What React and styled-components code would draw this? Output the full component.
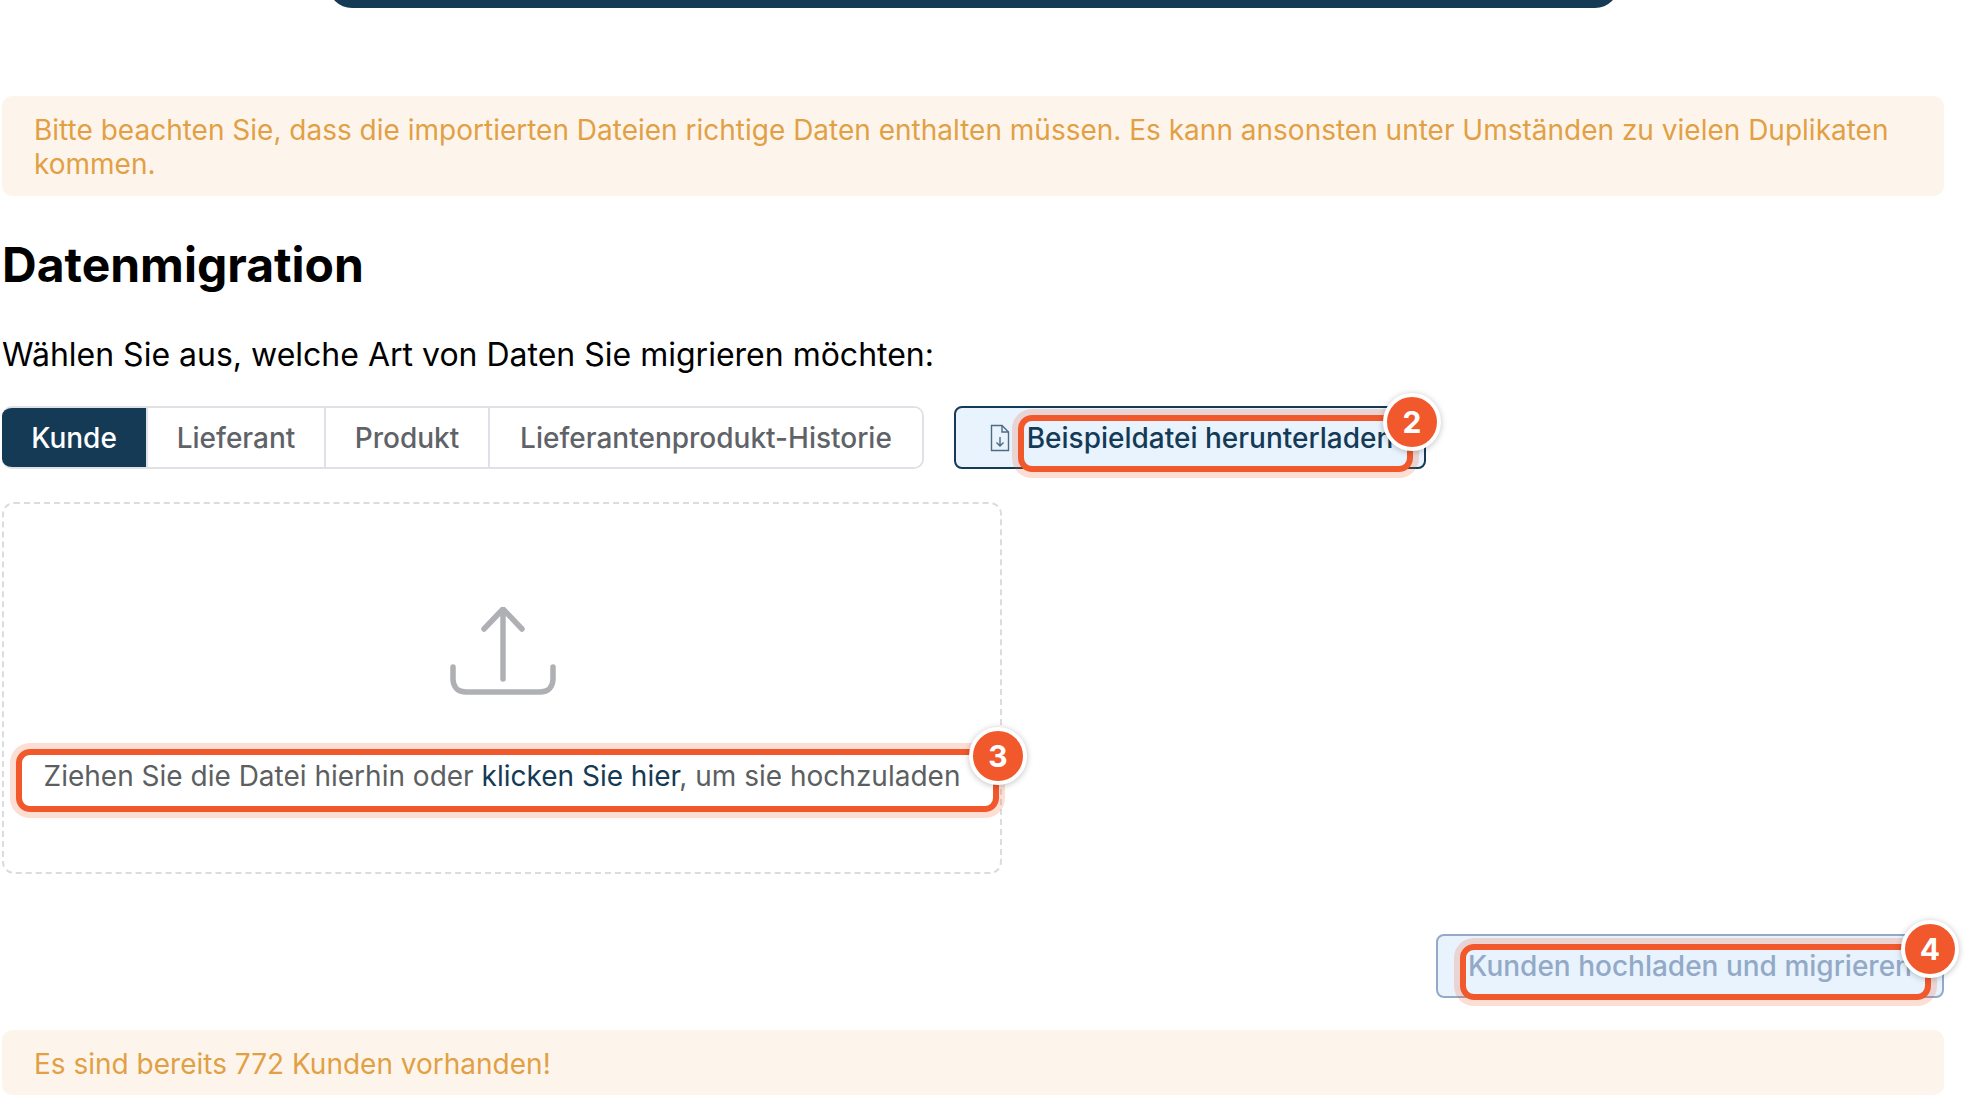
import React from "react";
import styled, { createGlobalStyle } from "styled-components";

const GlobalStyle = createGlobalStyle`
  html, body {
    margin: 0;
    padding: 0;
    background: #fff;
    font-family: "Inter", "Liberation Sans", sans-serif;
  }
`;

const navy = "#153a56";
const accent = "#f1582c";

const Page = styled.div`
  width: 1976px;
  height: 1120px;
  box-sizing: border-box;
  padding: 0 32px 0 2px;
  overflow: hidden;
`;

const TopBar = styled.div`
  width: 1291px;
  height: 24px;
  margin: -16px 0 0 326px;
  background: ${navy};
  border-radius: 0 0 24px 24px;
`;

const Alert = styled.div`
  box-sizing: border-box;
  margin-top: ${(p) => p.$top}px;
  padding: 17px 32px ${(p) => p.$bottom}px;
  background: #fdf5ec;
  color: #e2a044;
  border-radius: 10px;
  font-size: 28px;
  line-height: 34px;
`;

const Title = styled.h1`
  margin: 43px 0 0;
  font-size: 48px;
  line-height: 52px;
  font-weight: 700;
  color: #000;
`;

const Lead = styled.p`
  margin: 44px 0 0;
  font-size: 32px;
  line-height: 40px;
  color: #000;
`;

const Toolbar = styled.div`
  display: flex;
  gap: 30px;
  margin-top: 31px;
`;

const Tabs = styled.div`
  display: flex;
  box-sizing: border-box;
  width: 922px;
  height: 63px;
  border: 2px solid #dfe1e6;
  border-left: 0;
  border-radius: 10px;
  overflow: hidden;
`;

const Tab = styled.div`
  display: flex;
  align-items: center;
  justify-content: center;
  flex: ${(p) => (p.$width ? `0 0 ${p.$width}px` : "1")};
  box-sizing: border-box;
  font-size: 28px;
  font-weight: 500;
  color: ${(p) => (p.$active ? "#fff" : "#5f6368")};
  background: ${(p) => (p.$active ? navy : "#fff")};
  & + & {
    border-left: 2px solid #dfe1e6;
  }
`;

const Button = styled.div`
  position: relative;
  display: flex;
  align-items: center;
  justify-content: center;
  gap: 17px;
  box-sizing: border-box;
  width: ${(p) => p.$width}px;
  height: ${(p) => p.$height}px;
  padding-left: ${(p) => p.$indent || 0}px;
  background: #e8f3fd;
  border: 2px solid ${(p) => (p.$disabled ? "#93a9c6" : navy)};
  border-radius: 8px;
  color: ${(p) => (p.$disabled ? "#93a9c6" : navy)};
  font-size: 28px;
  font-weight: 500;
`;

const DropZone = styled.div`
  position: relative;
  display: flex;
  flex-direction: column;
  align-items: center;
  box-sizing: border-box;
  width: 1000px;
  height: 372px;
  margin-top: 33px;
  padding-top: 103px;
  border: 2px dashed #dcdcdc;
  border-radius: 12px;
`;

const DropText = styled.div`
  margin-top: 59px;
  font-size: 28px;
  line-height: 44px;
  color: #5c5f62;
  white-space: nowrap;
`;

const Link = styled.span`
  color: ${navy};
`;

const Actions = styled.div`
  display: flex;
  justify-content: flex-end;
  margin-top: 60px;
`;

const Highlight = styled.div`
  position: absolute;
  top: ${(p) => p.$top}px;
  left: ${(p) => p.$left}px;
  width: ${(p) => p.$width}px;
  height: ${(p) => p.$height}px;
  box-sizing: border-box;
  border: 6px solid ${accent};
  border-radius: 14px;
  box-shadow: 0 0 0 6px rgba(241, 88, 44, 0.2);
`;

const Badge = styled.div`
  position: absolute;
  top: ${(p) => p.$top}px;
  right: ${(p) => p.$right}px;
  display: flex;
  align-items: center;
  justify-content: center;
  box-sizing: border-box;
  width: 58px;
  height: 58px;
  border: 4px solid #fff;
  border-radius: 50%;
  background: ${accent};
  color: #fff;
  font-size: 30px;
  font-weight: 700;
  box-shadow: 0 1px 6px rgba(0, 0, 0, 0.25);
`;

function FileDownIcon() {
  return (
    <svg width="20" height="28" viewBox="0 0 20 28" fill="none" stroke="#4d6b82" strokeWidth="1.4">
      <path d="M1.5 1.5H12L18.5 8V26.5H1.5Z" />
      <path d="M12 1.5V8H18.5" />
      <path d="M10 13V22M6.5 18.5L10 22L13.5 18.5" />
    </svg>
  );
}

function UploadIcon() {
  return (
    <svg width="108" height="88" viewBox="-2 0 108 88" fill="none" stroke="#aeb0b4" strokeWidth="5.5" strokeLinecap="round">
      <path d="M53 4V72" />
      <path d="M34 22L53 2L72 22" strokeLinejoin="round" />
      <path d="M3 60V72C3 80 8 85 16 85H90C98 85 103 80 103 72V60" />
    </svg>
  );
}

export default function App() {
  return (
    <Page>
      <GlobalStyle />
      <TopBar />
      <Alert $top={88} $bottom={15}>
        Bitte beachten Sie, dass die importierten Dateien richtige Daten enthalten müssen. Es kann ansonsten unter
        Umständen zu vielen Duplikaten kommen.
      </Alert>
      <Title>Datenmigration</Title>
      <Lead>Wählen Sie aus, welche Art von Daten Sie migrieren möchten:</Lead>
      <Toolbar>
        <Tabs>
          <Tab $active $width={144}>Kunde</Tab>
          <Tab $width={178}>Lieferant</Tab>
          <Tab $width={164}>Produkt</Tab>
          <Tab>Lieferantenprodukt-Historie</Tab>
        </Tabs>
        <Button $width={472} $height={63} $indent={3}>
          <FileDownIcon />
          Beispieldatei herunterladen
          <Highlight $top={7} $left={62} $width={395} $height={57} />
          <Badge $top={-15} $right={-17}>2</Badge>
        </Button>
      </Toolbar>
      <DropZone>
        <UploadIcon />
        <DropText>
          Ziehen Sie die Datei hierhin oder <Link>klicken Sie hier</Link>, um sie hochzuladen
        </DropText>
        <Highlight $top={245} $left={12} $width={983} $height={63} />
        <Badge $top={223} $right={-27}>3</Badge>
      </DropZone>
      <Actions>
        <Button $disabled $width={508} $height={64}>
          Kunden hochladen und migrieren
          <Highlight $top={8} $left={22} $width={471} $height={56} />
          <Badge $top={-16} $right={-17}>4</Badge>
        </Button>
      </Actions>
      <Alert $top={32} $bottom={14}>Es sind bereits 772 Kunden vorhanden!</Alert>
    </Page>
  );
}
